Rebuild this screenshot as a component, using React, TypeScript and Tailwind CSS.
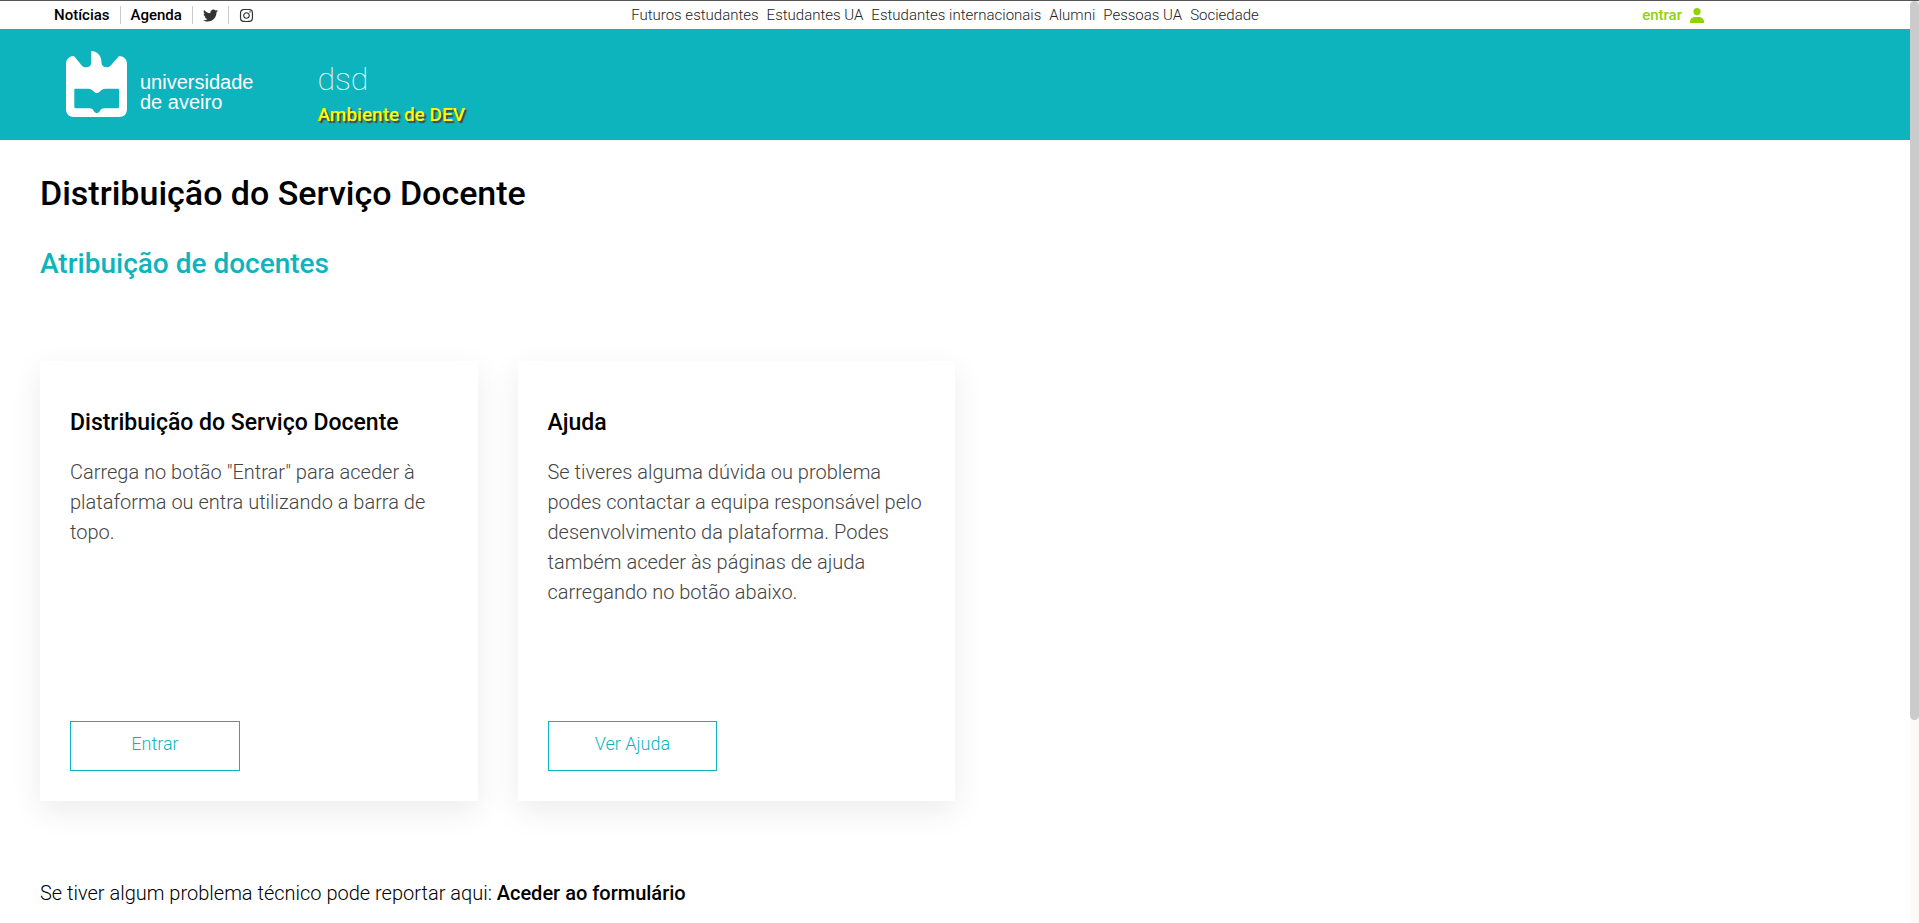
import { FaInstagram, FaTwitter } from "react-icons/fa";

const audiences = [
  "Futuros estudantes",
  "Estudantes UA",
  "Estudantes internacionais",
  "Alumni",
  "Pessoas UA",
  "Sociedade",
];

const cards = [
  {
    title: "Distribuição do Serviço Docente",
    text: 'Carrega no botão "Entrar" para aceder à plataforma ou entra utilizando a barra de topo.',
    action: "Entrar",
  },
  {
    title: "Ajuda",
    text: "Se tiveres alguma dúvida ou problema podes contactar a equipa responsável pelo desenvolvimento da plataforma. Podes também aceder às páginas de ajuda carregando no botão abaixo.",
    action: "Ver Ajuda",
  },
];

function TopBar() {
  return (
    <div className="grid h-[29px] grid-cols-[1fr_auto_1fr] items-center border-t border-[#555] pr-5 text-[15px] leading-[18px]">
      <ul className="flex h-[18px] items-center divide-x divide-[#ccc] pl-11 font-medium text-black">
        <li className="px-2.5">
          <a href="#noticias">Notícias</a>
        </li>
        <li className="px-2.5">
          <a href="#agenda">Agenda</a>
        </li>
        <li className="flex h-[18px] items-center px-2.5">
          <a href="#twitter" aria-label="Twitter">
            <FaTwitter className="size-[15px] text-[#333]" />
          </a>
        </li>
        <li className="flex h-[18px] items-center px-2.5">
          <a href="#instagram" aria-label="Instagram">
            <FaInstagram className="size-[15px] text-[#333]" />
          </a>
        </li>
      </ul>
      <nav className="flex gap-2 font-light text-[#222]">
        {audiences.map((label) => (
          <a key={label} href="#publico">
            {label}
          </a>
        ))}
      </nav>
      <div className="flex justify-end pr-[186px]">
        <a href="#entrar" className="flex items-center gap-2 font-medium text-[#8fd400]">
          entrar
          <svg viewBox="0 0 14 15" className="h-[15px] w-3.5" fill="currentColor" aria-hidden="true">
            <circle cx="7" cy="3.6" r="3.6" />
            <path d="M0 15v-1.2C0 10.600 2.600 8.900 5 8.900h4c2.400 0 5 1.700 5 4.900V15z" />
          </svg>
        </a>
      </div>
    </div>
  );
}

function Logo() {
  return (
    <a href="#inicio" className="flex gap-[13px] text-white">
      <svg viewBox="0 0 61 66" className="h-[66px] w-[61px]" aria-hidden="true">
        <path
          fill="#fff"
          fillRule="evenodd"
          d="M0 13C0 8 3.500 5 8 5l7.500 9.200C17 16 18.500 16.400 20.500 16.200c3 0 4.700-1.700 4.700-4.700V0c6.500.3 10.300 5 10.300 11.500 0 3 2.300 4.700 4.800 4.700 2.200 0 3.600-.7 4.900-2.300L53 5c4.500 0 8 3 8 8v45c0 5-3 8-8 8H8c-5 0-8-3-8-8zM9.500 37.700c-.8 0-1.200.4-1.200 1.200V56c0 .8.400 1.200 1.200 1.200h14c2.500 0 3.200 1 4.300 2.700 1.700 2.800 4.400 2.800 6.100 0 1.100-1.700 1.800-2.700 4.300-2.700h13.600c.8 0 1.200-.4 1.200-1.200V38.900c0-.8-.4-1.200-1.200-1.200H39.500c-2.700 0-3.600.8-5.300 2.600-2.300 2.400-4.400 2.400-6.700 0-1.700-1.800-2.600-2.600-5.300-2.600z"
        />
      </svg>
      <span className="mt-[21px] font-['Liberation_Sans',Arial,sans-serif] text-xl leading-5">
        universidade
        <br />
        de aveiro
      </span>
    </a>
  );
}

export default function App() {
  return (
    <div className="flex min-h-screen bg-white font-[Roboto,sans-serif]">
      <div className="min-w-0 flex-1">
        <TopBar />
        <header className="flex h-[111px] items-start bg-[#0eb4bd] pl-[66px] pt-[22px]">
          <Logo />
          <div className="ml-16 mt-2 text-white">
            <p className="text-[32px] font-thin leading-10">dsd</p>
            <p className="mt-1 text-[19px] font-medium leading-6 text-[#ff0] [text-shadow:2px_2px_1px_#444]">
              Ambiente de DEV
            </p>
          </div>
        </header>
        <main className="pl-10 pt-[33px]">
          <h1 className="text-[34px] font-medium leading-10 text-black">
            Distribuição do Serviço Docente
          </h1>
          <h2 className="mt-[35px] text-[28px] font-medium leading-8 text-[#0eb4bd]">
            Atribuição de docentes
          </h2>
          <div className="mt-[81px] grid grid-cols-4 gap-10">
            {cards.map((card) => (
              <section
                key={card.title}
                className="flex min-h-[440px] flex-col items-start bg-white px-[30px] pb-[30px] pt-[47px] shadow-[0_10px_30px_rgba(0,15,30,0.08)]"
              >
                <h3 className="text-[23px] font-medium leading-[30px] text-black">{card.title}</h3>
                <p className="mt-[19px] text-xl font-light leading-[30px] text-[#444]">{card.text}</p>
                <button
                  type="button"
                  className="mt-auto h-[50px] w-[45%] border border-[#0eb4bd] pb-1 text-lg font-light text-[#0eb4bd]"
                >
                  {card.action}
                </button>
              </section>
            ))}
          </div>
          <p className="mt-[77px] text-xl font-light leading-[30px] text-black">
            Se tiver algum problema técnico pode reportar aqui:{" "}
            <a href="#formulario" className="font-medium">
              Aceder ao formulário
            </a>
          </p>
        </main>
      </div>
      <div className="flex w-[9px] flex-col border-t border-[#555] bg-[#fdf9f9]" aria-hidden="true">
        <div className="h-[78%] rounded-full bg-[#cbcbcb]" />
      </div>
    </div>
  );
}
